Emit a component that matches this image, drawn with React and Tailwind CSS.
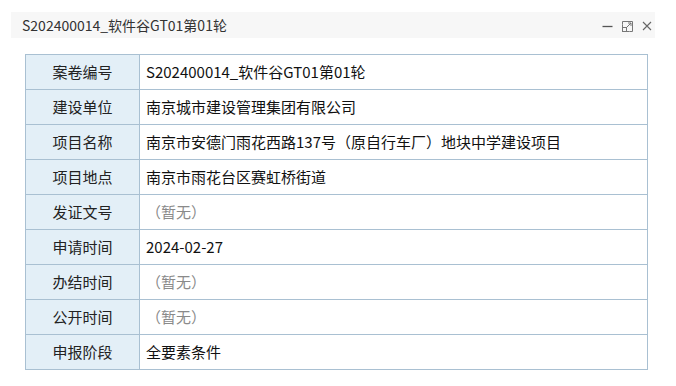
const rows = [
  { label: "案卷编号", value: "S202400014_软件谷GT01第01轮" },
  { label: "建设单位", value: "南京城市建设管理集团有限公司" },
  { label: "项目名称", value: "南京市安德门雨花西路137号（原自行车厂）地块中学建设项目" },
  { label: "项目地点", value: "南京市雨花台区赛虹桥街道" },
  { label: "发证文号", value: null },
  { label: "申请时间", value: "2024-02-27" },
  { label: "办结时间", value: null },
  { label: "公开时间", value: null },
  { label: "申报阶段", value: "全要素条件" },
];

export default function App() {
  return (
    <div
      className="h-[386px] w-[676px] bg-white text-[#222]"
      style={{ fontFamily: '"Microsoft YaHei", "Noto Sans CJK SC", "Liberation Sans", sans-serif' }}
    >
      <div className="pt-3">
        <div className="mx-[11px] flex h-[26px] w-[644px] items-center justify-between bg-[#f7f7f7] pl-[11px] pr-[3px]">
          <span className="text-sm text-[#333]">S202400014_软件谷GT01第01轮</span>
          <div className="flex items-center gap-[9px] pt-[2px] text-[#666]">
            <svg width="11" height="11" viewBox="0 0 11 11">
              <path d="M0.5 5.5h10" stroke="#555" strokeWidth="1.3" />
            </svg>
            <svg width="11" height="11" viewBox="0 0 11 11" fill="none" stroke="#777" strokeWidth="1">
              <path d="M0.5 3.5v7h7" />
              <path d="M0.5 3.5V0.5h10v10h-3" />
              <rect x="0.5" y="6.5" width="4" height="4" />
              <path d="M5 6L9 2M6 2h3v3" />
            </svg>
            <svg width="10" height="10" viewBox="0 0 10 10">
              <path d="M1 1l8 8M9 1l-8 8" stroke="#666" strokeWidth="1.1" />
            </svg>
          </div>
        </div>
      </div>

      <table className="ml-[25px] mt-4 w-[623px] border-collapse text-[15px]">
        <tbody>
          {rows.map((row) => (
            <tr key={row.label} className="h-[35px]">
              <td className="w-[114px] border border-[#a9c0d2] bg-[#e3eff7] text-center text-[#222]">
                {row.label}
              </td>
              <td className="border border-[#a9c0d2] pl-[6px] text-[#111]">
                {row.value ?? <span className="text-[#8a8a8a]">（暂无）</span>}
              </td>
            </tr>
          ))}
        </tbody>
      </table>
    </div>
  );
}
